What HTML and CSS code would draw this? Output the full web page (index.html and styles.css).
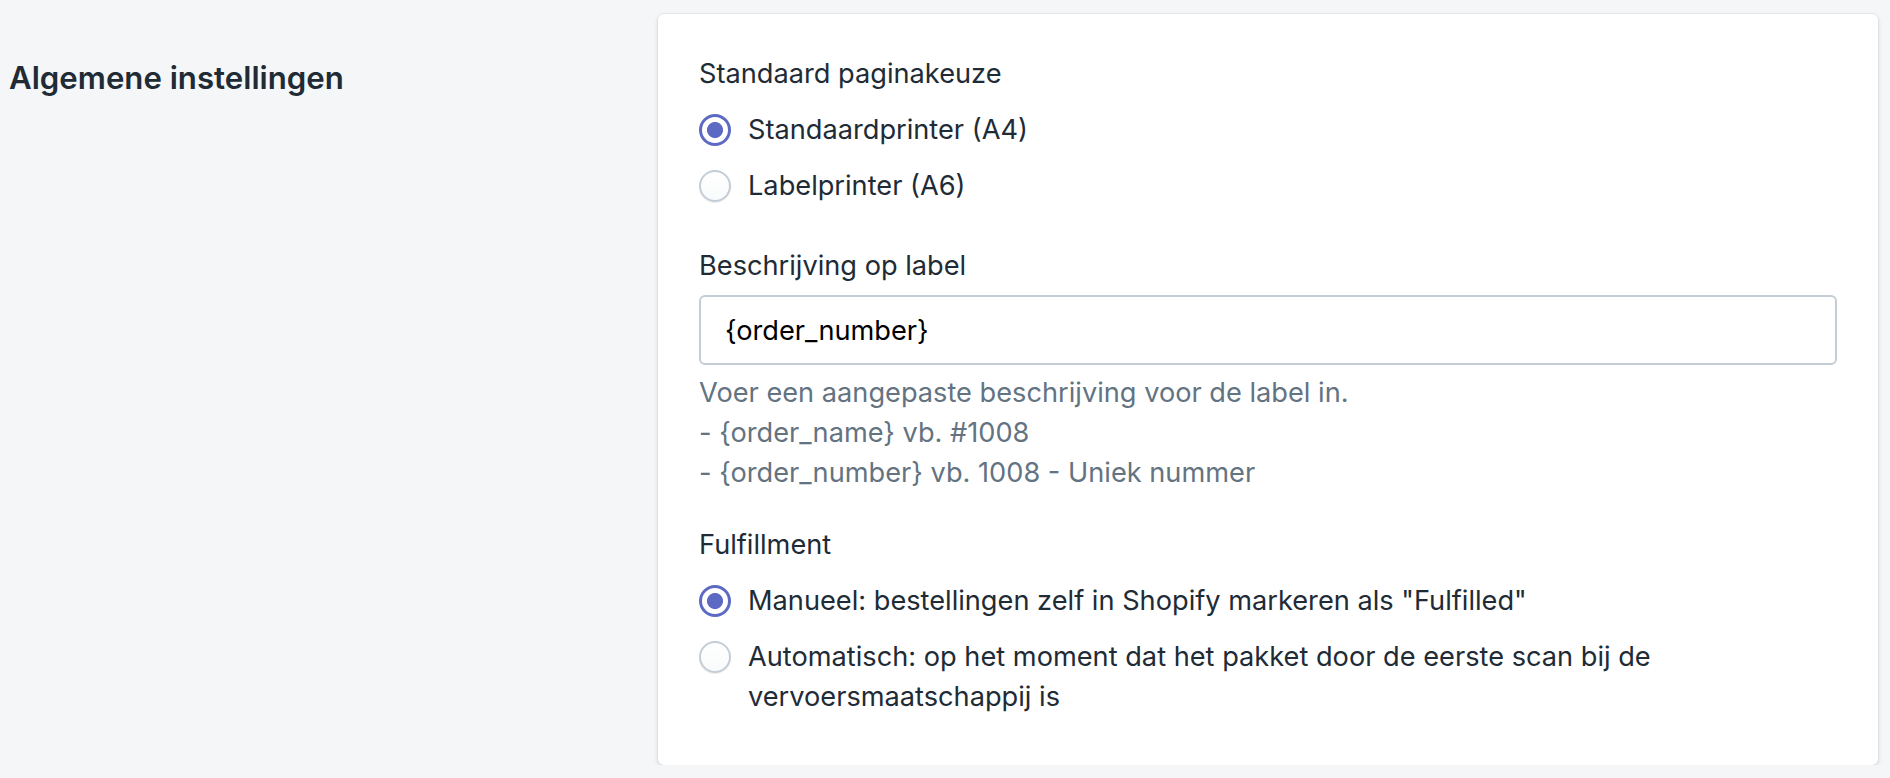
FILE: index.html
```html
<!DOCTYPE html>
<html lang="nl">
<head>
<meta charset="utf-8">
<title>Algemene instellingen</title>
<link rel="stylesheet" href="styles.css">
</head>
<body>
<div class="layout">
  <div class="section-desc">
    <h2 class="heading">Algemene instellingen</h2>
  </div>
  <div class="card">
    <div class="form">
      <fieldset class="choice-list">
        <legend class="label">Standaard paginakeuze</legend>
        <label class="choice">
          <input class="radio" type="radio" name="page" checked>
          <span class="choice-text">Standaardprinter (A4)</span>
        </label>
        <label class="choice">
          <input class="radio" type="radio" name="page">
          <span class="choice-text">Labelprinter (A6)</span>
        </label>
      </fieldset>

      <div class="field">
        <label class="label" for="desc">Beschrijving op label</label>
        <input class="text-input" id="desc" type="text" value="{order_number}">
        <p class="help">Voer een aangepaste beschrijving voor de label in.<br>- {order_name} vb. #1008<br>- {order_number} vb. 1008 - Uniek nummer</p>
      </div>

      <fieldset class="choice-list">
        <legend class="label">Fulfillment</legend>
        <label class="choice">
          <input class="radio" type="radio" name="ful" checked>
          <span class="choice-text">Manueel: bestellingen zelf in Shopify markeren als "Fulfilled"</span>
        </label>
        <label class="choice">
          <input class="radio" type="radio" name="ful">
          <span class="choice-text">Automatisch: op het moment dat het pakket door de eerste scan bij de vervoersmaatschappij is</span>
        </label>
      </fieldset>
    </div>
  </div>
</div>
</body>
</html>
```
FILE: styles.css
```css
* { box-sizing: border-box; }

html, body {
  margin: 0;
  padding: 0;
  background: #f4f6f8;
}

body {
  font-family: Inter, "Noto Sans", "DejaVu Sans", sans-serif;
  color: #212b36;
  font-size: 27.2px;
  line-height: 40px;
}

.layout {
  display: flex;
  align-items: flex-start;
  padding-top: 14px;
}

.section-desc {
  flex: 0 0 658px;
  padding-left: 9px;
  padding-top: 40px;
}

.heading {
  margin: 0;
  font-size: 31.2px;
  line-height: 48px;
  font-weight: 600;
  color: #212b36;
}

.card {
  width: 1220px;
  background: #fff;
  border-radius: 6px;
  box-shadow: 0 0 0 1px rgba(63, 63, 68, 0.06), 0 2px 5px 0 rgba(63, 63, 68, 0.15);
  padding: 40px 41px;
}

.form {
  display: flex;
  flex-direction: column;
  gap: 32px;
}

.choice-list {
  border: 0;
  margin: 0;
  padding: 0;
  min-width: 0;
}

.label {
  display: block;
  padding: 0;
  margin: 0 0 8px;
  color: #212b36;
}

.choice {
  display: flex;
  align-items: flex-start;
  gap: 17px;
  padding: 8px 0;
  cursor: pointer;
}

.radio {
  appearance: none;
  -webkit-appearance: none;
  flex: 0 0 32px;
  width: 32px;
  height: 32px;
  margin: 4px 0 0;
  border-radius: 50%;
  border: 2px solid #c4cdd5;
  background: linear-gradient(180deg, #ffffff, #f9fafb);
  box-shadow: 0 1px 1px 0 rgba(22, 29, 37, 0.08);
}

.radio:checked {
  border: 3px solid #5c6ac4;
  background: radial-gradient(circle, #5c6ac4 0, #5c6ac4 7.6px, #ffffff 8.4px);
  box-shadow: none;
}

.choice-text {
  flex: 1;
}

.field {
  display: flex;
  flex-direction: column;
}

.field .label {
  margin-bottom: 9px;
}

.text-input {
  display: block;
  width: 100%;
  height: 70px;
  border: 2px solid #c4cdd5;
  border-radius: 6px;
  padding: 0 24px;
  font-family: inherit;
  font-size: 27.2px;
  line-height: 40px;
  color: #000;
  background: #fff;
  outline: none;
}

.help {
  margin: 8px 0 0;
  color: #637381;
}
```
